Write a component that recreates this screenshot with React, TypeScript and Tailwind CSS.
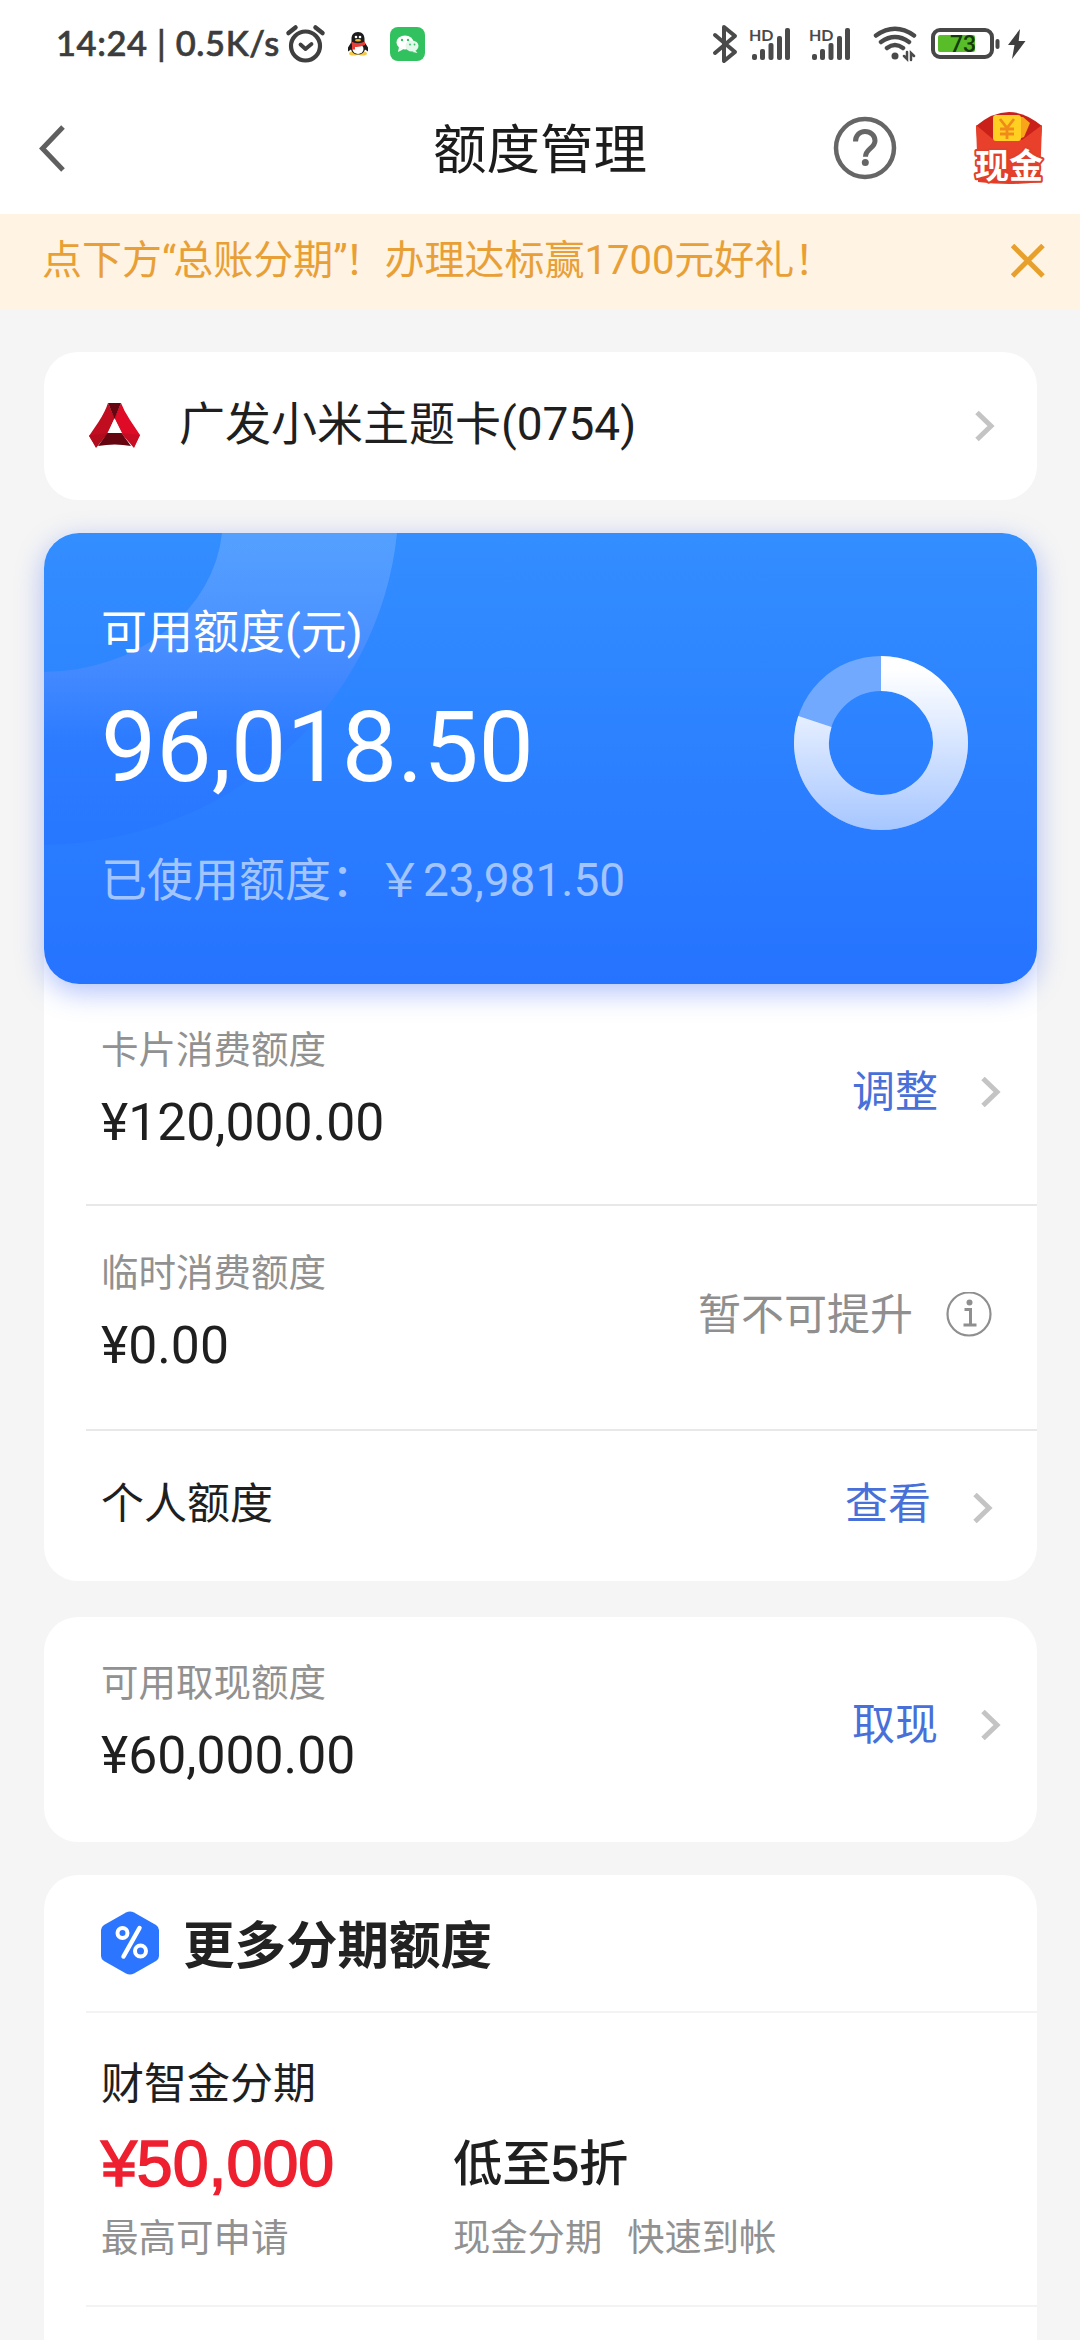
import type { ReactNode } from 'react'

const Chevron = ({ className = '' }: { className?: string }) => (
  <svg className={`shrink-0 ${className}`} width="20" height="32" viewBox="0 0 20 32" fill="none">
    <path d="M2 2.500 16 16 2 29.500" stroke="#c4c4c4" strokeWidth="5" />
  </svg>
)

const Signal = () => (
  <div className="relative flex h-[36px] w-[42px] items-end">
    <span className="absolute top-0 left-0 font-['Lato',sans-serif] text-[16px] leading-[18px] font-bold text-[#4a4a4a]">
      HD
    </span>
    <svg width="42" height="36" viewBox="0 0 42 36" fill="#4a4a4a">
      <rect x="3" y="28" width="5" height="6" rx="2" />
      <rect x="11" y="23" width="5" height="11" rx="2" />
      <rect x="19.500" y="17" width="5" height="17" rx="2" />
      <rect x="28" y="10" width="5" height="24" rx="2" />
      <rect x="36" y="2" width="5" height="32" rx="2" />
    </svg>
  </div>
)

const StatusBar = () => (
  <div className="flex h-[88px] items-center pl-[56px]">
    <span className="mb-[2px] w-[226px] whitespace-nowrap font-['Lato',sans-serif] text-[34.500px] font-medium tracking-[0.600px] text-[#3c3c3c] [-webkit-text-stroke:0.700px_#3c3c3c]">
      14:24 | 0.5K/s
    </span>
    {/* alarm */}
    <svg className="ml-[3px]" width="42" height="40" viewBox="0 0 42 40" fill="none" stroke="#3f3f3f">
      <circle cx="20.500" cy="22" r="14.500" strokeWidth="4.200" />
      <path d="M3.500 9 10.500 3.500M30.500 3.500 37.500 9" strokeWidth="4.500" strokeLinecap="round" />
      <path d="m15.500 20.500 5 4.500 6-5" strokeWidth="3.800" strokeLinecap="round" strokeLinejoin="round" />
    </svg>
    {/* penguin */}
    <svg className="ml-[20px]" width="22" height="24" viewBox="0 0 22 24">
      <ellipse cx="6.500" cy="21.500" rx="4.500" ry="2" fill="#f7c948" />
      <ellipse cx="15.500" cy="21.500" rx="4.500" ry="2" fill="#f7c948" />
      <path d="M11 0c-4.500 0-6.500 3-6.500 7v3L1 15.500v4l3-2C5 21 7.500 22.500 11 22.500s6-1.500 7-5l3 2v-4L17.500 10V7c0-4-2-7-6.500-7Z" fill="#1c1c1c" />
      <ellipse cx="11" cy="17" rx="5.500" ry="5" fill="#fff" />
      <path d="M4 9.500q7 3.500 14 0v3.500q-6 2.500-10 2v2.500H5V13Z" fill="#e5403a" />
      <circle cx="9" cy="5" r="1.300" fill="#fff" />
      <circle cx="13" cy="5" r="1.300" fill="#fff" />
      <ellipse cx="11" cy="8.300" rx="3" ry="1.200" fill="#f5b52e" />
    </svg>
    {/* chat */}
    <svg className="ml-[21px]" width="35" height="34" viewBox="0 0 35 34">
      <rect width="35" height="34" rx="8" fill="#31c15f" />
      <ellipse cx="15" cy="15.500" rx="8.500" ry="7" fill="#fff" />
      <path d="m9 20-1 5 5-2.500Z" fill="#fff" />
      <ellipse cx="22" cy="19" rx="6.500" ry="5.500" fill="#e3f7ea" />
      <path d="m25 23 2.500 3-5-1Z" fill="#e3f7ea" />
      <circle cx="12" cy="13" r="1.200" fill="#31c15f" />
      <circle cx="18" cy="13" r="1.200" fill="#31c15f" />
      <circle cx="20" cy="17.500" r=".9" fill="#31c15f" />
      <circle cx="24.500" cy="17.500" r=".9" fill="#31c15f" />
    </svg>

    <div className="ml-auto flex items-center pr-[54px]">
      <svg width="26" height="40" viewBox="0 0 26 40" fill="none" stroke="#4a4a4a" strokeWidth="4" strokeLinecap="round" strokeLinejoin="round">
        <path d="m3 11 20 17-11 9V3l11 9L3 29" />
      </svg>
      <div className="ml-[11px]"><Signal /></div>
      <div className="ml-[18px]"><Signal /></div>
      <svg className="ml-[22px]" width="44" height="36" viewBox="0 0 44 36" fill="none" stroke="#4a4a4a" strokeWidth="4.500" strokeLinecap="round">
        <path d="M3 9.500Q22-4 41 9.500M8 16q14-10 28 0M14 22q8-6 16 0" />
        <circle cx="22" cy="30" r="3.500" fill="#4a4a4a" stroke="none" />
        <path d="M34 26v7l-3-3M38 34v-7l3 3" strokeWidth="2.500" />
      </svg>
      <svg className="ml-[14px]" width="70" height="32" viewBox="0 0 70 32">
        <rect x="2" y="2" width="59" height="27" rx="7" fill="none" stroke="#474747" strokeWidth="4" />
        <rect x="7" y="7" width="37" height="17" rx="2" fill="#58bd28" />
        <rect x="64.500" y="11" width="4" height="10" rx="2" fill="#474747" />
        <text x="32" y="24" fontSize="23" fontWeight="500" textAnchor="middle" fontFamily="Roboto, sans-serif" fill="#143b0c">
          73
        </text>
      </svg>
      <svg className="ml-[7px]" width="18" height="30" viewBox="0 0 18 30">
        <path d="M12 0 0 16h6.500L4 30l13.500-18h-6.800Z" fill="#3f3f3f" />
      </svg>
    </div>
  </div>
)

const Header = () => (
  <header className="grid h-[126px] grid-cols-3 items-center pb-[6px]">
    <svg className="mt-[2px] ml-[38px]" width="30" height="50" viewBox="0 0 30 50" fill="none">
      <path d="M25 3 4.500 24.500 25 46" stroke="#5f5f5f" strokeWidth="5" />
    </svg>
    <h1 className="mt-[6px] text-center text-[53.500px] leading-[60px] text-[#1c1c1c]">额度管理</h1>
    <div className="flex items-center justify-end pr-[35px]">
      <svg width="64" height="64" viewBox="0 0 64 64" fill="none" stroke="#666">
        <circle cx="32" cy="32" r="29" strokeWidth="4.500" />
        <path d="M22.500 25.500c0-6 4-10 9.500-10s10 4 10 9.200c0 7.500-9.500 8-9.500 16" strokeWidth="5" />
        <circle cx="32.300" cy="46.500" r="3.500" fill="#666" stroke="none" />
      </svg>
      {/* cash red packet */}
      <svg className="ml-[76px]" width="72" height="76" viewBox="0 0 72 76">
        <path d="M3 16Q36-12 69 16l-2 24H5Z" fill="#c9201a" />
        <path d="m3 15 18 15h28l20-15-2 57q-31 4-62 0Z" fill="#e8402a" />
        <path d="M40 7h10l7 6-6 14-11 4Z" fill="#f9a51b" />
        <rect x="20" y="5" width="28" height="26" rx="3" fill="#ffd021" />
        <path d="m27 9 7 9 7-9M34 18v11M27 19h14M27 24h14" stroke="#f08a1a" strokeWidth="2.800" fill="none" />
        <path d="M5 66h62v5q-31 4-62 0Z" fill="#e43b24" />
        <text
          x="36"
          y="68"
          fontSize="34"
          fontWeight="700"
          textAnchor="middle"
          fill="#fff"
          stroke="#e0402c"
          strokeWidth="4"
          strokeLinejoin="round"
          paintOrder="stroke"
        >
          现金
        </text>
      </svg>
    </div>
  </header>
)

const Notice = () => (
  <div className="flex h-[96px] items-center justify-between bg-[#fff3e3] pr-[35px] pb-[2px] pl-[42px]">
    <p className="whitespace-nowrap text-[40px] leading-[56px] text-[#e8a036]">
      点下方<span className="tracking-[-3px]">“</span>总账分期<span className="tracking-[-3px]">”</span>！办理达标赢1700元好礼！
    </p>
    <svg className="mb-[1px]" width="34" height="34" viewBox="0 0 34 34" fill="none">
      <path d="M1.500 1.500 32 32M32 1.500 1.500 32" stroke="#e8a02c" strokeWidth="5" />
    </svg>
  </div>
)

const BankLogo = () => (
  <svg width="52" height="46" viewBox="0 0 52 46">
    <path d="M19 0q-3 9-9.500 19L0 33l7 11 12-14 6.500-15Z" fill="#c00d20" />
    <path d="M32 0q3 8 9 17l10 15-6 12-12-14-7.500-15Z" fill="#de0a26" />
    <path d="M19 0h13l-6.500 16Z" fill="#64050f" />
    <path d="M0 32.500 19 30 7 45Z" fill="#b30d1d" />
    <path d="M51 32 32 30l13 15Z" fill="#c80c23" />
    <path d="M18.500 30h14L42 43q-16-3-33 0Z" fill="#64050f" />
    <path d="m25.500 16 7 14h-14Z" fill="#fff" />
  </svg>
)

const CreditCard = () => (
  <section className="relative flex h-[451px] justify-between overflow-hidden rounded-[35px] bg-linear-to-b from-[#338eff] to-[#2673ff] text-white">
    {/* arc in the corner */}
    <svg className="absolute top-0 left-0" width="360" height="320" viewBox="0 0 360 320">
      <defs>
        <linearGradient id="arc" x1="0" y1="0" x2="0" y2="1">
          <stop offset="0" stopColor="#fff" stopOpacity=".16" />
          <stop offset=".4" stopColor="#8f9bff" stopOpacity=".24" />
          <stop offset=".66" stopColor="#2d6dff" stopOpacity=".3" />
          <stop offset="1" stopColor="#2470ff" stopOpacity=".4" />
        </linearGradient>
      </defs>
      <path d="M178 0A180 152 0 0 1 0 139V312A360 345 0 0 0 353 0Z" fill="url(#arc)" />
    </svg>
    <div className="relative pl-[57px]">
      <p className="mt-[66px] text-[46px] leading-[66px]">可用额度(元)</p>
      <p className="mt-[24px] text-[98.500px] leading-[118px]">96,018.50</p>
      <p className="mt-[40px] text-[46px] leading-[66px] whitespace-nowrap text-[#a3c5ff]">已使用额度：￥23,981.50</p>
    </div>
    <svg className="relative mt-[122px] mr-[68px]" width="176" height="176" viewBox="0 0 176 176" fill="none">
      <defs>
        <linearGradient id="ring" gradientUnits="userSpaceOnUse" x1="0" y1="0" x2="0" y2="176">
          <stop offset=".08" stopColor="#fff" />
          <stop offset="1" stopColor="#a6c6ff" />
        </linearGradient>
      </defs>
      <circle cx="88" cy="88" r="69.500" stroke="#71a9ff" strokeWidth="35" />
      <path d="M88 18.500A69.500 69.500 0 1 1 21.900 66.500" stroke="url(#ring)" strokeWidth="35" />
    </svg>
  </section>
)

const Amount = ({ label, value }: { label: string; value: string }) => (
  <div>
    <p className="text-[37.500px] leading-[54px] text-[#919191]">{label}</p>
    <p className="mt-[16px] text-[51.700px] leading-[60px] text-[#1f1f1f]">{value}</p>
  </div>
)

const Action = ({ children }: { children: ReactNode }) => (
  <span className="text-[43px] leading-[60px] text-[#4870d8]">{children}</span>
)

const App = () => {
  return (
    <div
      lang="zh-CN"
      className="h-[2340px] w-[1080px] overflow-hidden bg-[#f5f5f5] font-['Roboto','Noto_Sans_CJK_SC',sans-serif]"
    >
      <div className="bg-white">
        <StatusBar />
        <Header />
      </div>
      <Notice />

      <main className="pt-[42px] pr-[43px] pl-[44px]">
        <section className="flex h-[148px] items-center rounded-[34px] bg-white pr-[42px] pl-[45px]">
          <BankLogo />
          <p className="mb-[4px] ml-[38px] text-[46px] leading-[66px] text-[#1f1f1f]">广发小米主题卡(0754)</p>
          <Chevron className="ml-auto" />
        </section>

        <div className="mt-[33px] rounded-[34px] bg-white">
          <div className="rounded-[35px] shadow-[0_8px_28px_rgba(60,100,240,0.4)]">
            <CreditCard />
          </div>
          <div className="pl-[42px]">
            <div className="flex h-[222px] items-start border-b-2 border-[#e8e8e8] pt-[39px] pr-[36px] pl-[15px]">
              <Amount label="卡片消费额度" value="¥120,000.00" />
              <div className="mt-[39px] ml-auto flex items-center">
                <Action>调整</Action>
                <Chevron className="ml-[43px]" />
              </div>
            </div>
            <div className="flex h-[225px] items-start border-b-2 border-[#e8e8e8] pt-[40px] pr-[45px] pl-[15px]">
              <Amount label="临时消费额度" value="¥0.00" />
              <div className="mt-[39px] ml-auto flex items-center">
                <span className="text-[43px] leading-[60px] text-[#8f8f8f]">暂不可提升</span>
                <svg className="ml-[33px]" width="46" height="46" viewBox="0 0 46 46" fill="none" stroke="#8f8f8f">
                  <circle cx="23" cy="22" r="21.500" strokeWidth="2.200" />
                  <circle cx="23.500" cy="10.500" r="3" fill="#8f8f8f" stroke="none" />
                  <path d="M18.500 17.500h6v15M17.500 33h13" strokeWidth="3" />
                </svg>
              </div>
            </div>
            <div className="flex h-[150px] items-center pr-[44px] pb-[4px] pl-[15px]">
              <span className="text-[43px] leading-[60px] text-[#1f1f1f]">个人额度</span>
              <div className="ml-auto flex items-center">
                <Action>查看</Action>
                <Chevron className="mt-[8px] ml-[42px]" />
              </div>
            </div>
          </div>
        </div>

        <section className="mt-[36px] flex h-[225px] items-start rounded-[34px] bg-white pt-[39px] pr-[36px] pl-[57px]">
          <Amount label="可用取现额度" value="¥60,000.00" />
          <div className="mt-[39px] ml-auto flex items-center">
            <Action>取现</Action>
            <Chevron className="ml-[43px]" />
          </div>
        </section>

        <section className="mt-[33px] h-[520px] rounded-t-[34px] bg-white pl-[42px]">
          <div className="flex h-[138px] items-center border-b-2 border-[#f3f3f3] pl-[14px]">
            <svg width="60" height="64" viewBox="0 0 60 64">
              <path d="M26 1.500q4-2 8 0L56 14q3 2 3 5v26q0 3-3 5L34 62.500q-4 2-8 0L4 50q-3-2-3-5V19q0-3 3-5Z" fill="#2b75ff" />
              <g fill="none" stroke="#fff" strokeWidth="4">
                <circle cx="22.500" cy="22" r="5" />
                <circle cx="40.500" cy="40" r="5.500" />
                <path d="M39.500 17 23.500 45.500" strokeWidth="4.500" strokeLinecap="round" />
              </g>
            </svg>
            <h2 className="mt-[7px] ml-[23px] text-[51.500px] leading-[70px] font-bold text-[#222]">更多分期额度</h2>
          </div>
          <div className="h-[294px] border-b-2 border-[#f3f3f3] pt-[41px] pl-[15px]">
            <p className="text-[43px] leading-[60px] text-[#1f1f1f]">财智金分期</p>
            <div className="mt-[12px] grid grid-cols-[352px_1fr]">
              <div>
                <p className="font-['Liberation_Sans',sans-serif] text-[64.500px] leading-[76px] text-[#ee2030] [-webkit-text-stroke:1.600px_#ee2030]">
                  ¥50,000
                </p>
                <p className="mt-[9px] text-[37.500px] leading-[54px] text-[#919191]">最高可申请</p>
              </div>
              <div>
                <p className="font-['Liberation_Sans','Noto_Sans_CJK_SC',sans-serif] text-[49.300px] leading-[76px] font-medium text-[#1f1f1f]">
                  低至<span className="[-webkit-text-stroke:1.200px_#1f1f1f]">5</span>折
                </p>
                <p className="mt-[9px] text-[37.300px] leading-[54px] text-[#919191]">
                  现金分期<span className="ml-[25px]">快速到帐</span>
                </p>
              </div>
            </div>
          </div>
        </section>
      </main>
    </div>
  )
}

export default App
